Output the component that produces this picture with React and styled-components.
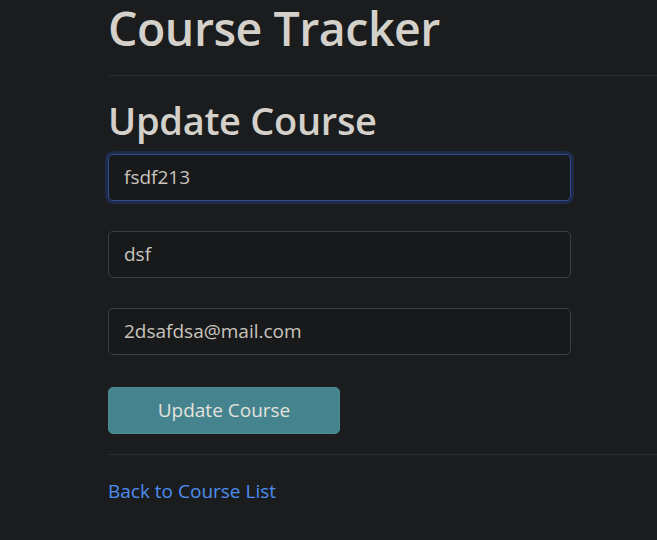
import styled, { createGlobalStyle } from 'styled-components';

const GlobalStyle = createGlobalStyle`
  html, body {
    margin: 0;
    padding: 0;
    background: #1b1c1e;
    color: #d4d1cb;
    font-family: "Segoe UI", "Open Sans", "Liberation Sans", sans-serif;
    overflow: hidden;
  }
`;

const Page = styled.div`
  padding-left: 108px;
  width: 700px;
`;

const Title = styled.h1`
  font-size: 46.5px;
  font-weight: 600;
  line-height: 56px;
  margin: 0;
  padding: 0 0 19px;
  letter-spacing: -0.5px;
`;

const Rule = styled.hr`
  border: 0;
  border-top: 1px solid #2a2c2f;
  margin: ${p => p.$top || 0}px 0 ${p => p.$bottom || 0}px;
`;

const SubTitle = styled.h2`
  font-size: 38px;
  font-weight: 600;
  line-height: 1.2;
  margin: 22px 0 10px;
  letter-spacing: -0.3px;
`;

const Form = styled.form`
  display: flex;
  flex-direction: column;
  gap: 30px;
  width: 463px;
`;

const Input = styled.input`
  box-sizing: border-box;
  height: 47px;
  width: 100%;
  padding: 0 15px;
  font-family: inherit;
  font-size: 19px;
  color: #c9c5be;
  background: #18191b;
  border: 1px solid ${p => (p.$focus ? '#2f4d8f' : '#3b3e42')};
  border-radius: 5px;
  box-shadow: ${p => (p.$focus ? '0 0 0 3px #1e2a47' : 'none')};
  outline: none;
`;

const Button = styled.button`
  width: 232px;
  height: 47px;
  margin-top: 2px;
  background: #45838f;
  border: 1px solid #4b8b97;
  border-radius: 5px;
  color: #e4e2dd;
  font-family: inherit;
  font-size: 19px;
  cursor: pointer;
`;

const BackLink = styled.a`
  display: inline-block;
  color: #4d8ef0;
  font-size: 19px;
  text-decoration: none;
`;

export default function App() {
  return (
    <Page>
      <GlobalStyle />
      <Title>Course Tracker</Title>
      <Rule />
      <SubTitle>Update Course</SubTitle>
      <Form onSubmit={e => e.preventDefault()}>
        <Input $focus defaultValue="fsdf213" />
        <Input defaultValue="dsf" />
        <Input defaultValue="2dsafdsa@mail.com" />
        <Button type="submit">Update Course</Button>
      </Form>
      <Rule $top={20} $bottom={23} />
      <BackLink href="#">Back to Course List</BackLink>
    </Page>
  );
}
